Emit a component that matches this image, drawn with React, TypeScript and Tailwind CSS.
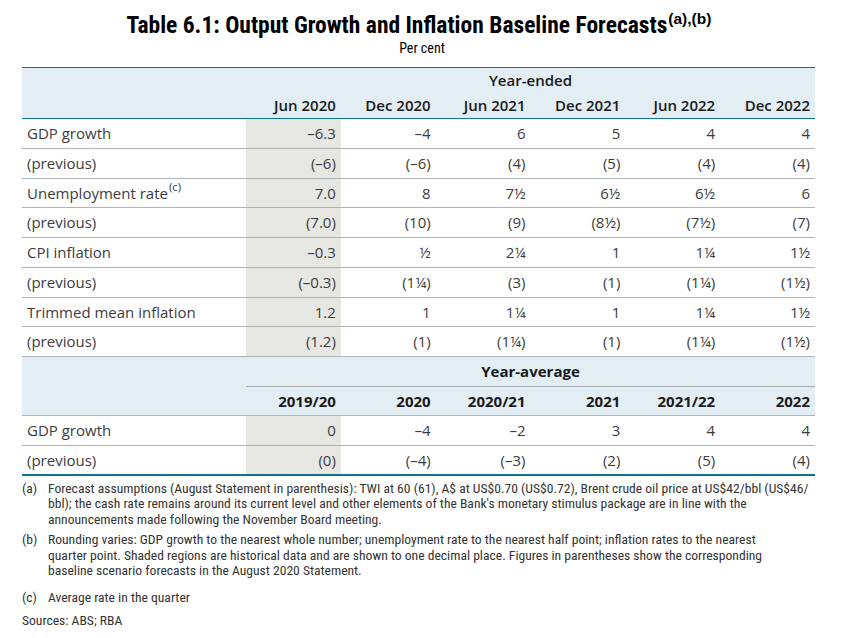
import React from "react";

const sec1 = [
  ["GDP growth", "–6.3", "–4", "6", "5", "4", "4"],
  ["(previous)", "(–6)", "(–6)", "(4)", "(5)", "(4)", "(4)"],
  ["Unemployment rate", "7.0", "8", "7½", "6½", "6½", "6"],
  ["(previous)", "(7.0)", "(10)", "(9)", "(8½)", "(7½)", "(7)"],
  ["CPI inflation", "–0.3", "½", "2¼", "1", "1¼", "1½"],
  ["(previous)", "(–0.3)", "(1¼)", "(3)", "(1)", "(1¼)", "(1½)"],
  ["Trimmed mean inflation", "1.2", "1", "1¼", "1", "1¼", "1½"],
  ["(previous)", "(1.2)", "(1)", "(1¼)", "(1)", "(1¼)", "(1½)"],
];

const sec2 = [
  ["GDP growth", "0", "–4", "–2", "3", "4", "4"],
  ["(previous)", "(0)", "(–4)", "(–3)", "(2)", "(5)", "(4)"],
];

function Row({ cells, last }: { cells: string[]; last?: boolean }) {
  return (
    <div
      className={
        "grid grid-cols-[224px_repeat(6,1fr)] " +
        (last
          ? "h-[30px] border-b-[2.5px] border-[#11718f]"
          : "h-[29.75px] border-b border-[#aeb3b6]")
      }
    >
      <div className="flex items-center pl-[5px]">
        {cells[0]}
        {cells[0] === "Unemployment rate" && (
          <sup className="text-[11.5px] top-[-0.55em] ml-[1px]">(c)</sup>
        )}
      </div>
      {cells.slice(1).map((c, i) => (
        <div
          key={i}
          className={
            "flex items-center justify-end pr-[5px] " +
            (i === 0 ? "bg-[#e6e6e2]" : "")
          }
        >
          {c}
        </div>
      ))}
    </div>
  );
}

export default function App() {
  return (
    <div className="w-[856px] h-[638px] bg-white text-[#3c3c3c] font-['Open_Sans',sans-serif] overflow-hidden">
      <div className="pt-[12px] pr-[18px] text-center font-['Roboto_Condensed','Roboto',sans-serif] font-bold text-[23.5px] leading-[27px] text-black">
        Table 6.1: Output Growth and Inflation Baseline Forecasts
        <sup className="font-['Liberation_Sans',sans-serif] text-[15.5px] top-[-0.55em] ml-[1px]">(a),(b)</sup>
      </div>
      <div className="mt-[1px] pr-[12px] text-center font-['Roboto_Condensed','Roboto',sans-serif] text-[14px] leading-[16px] text-black">
        Per cent
      </div>

      <div className="ml-[22px] mt-[11px] w-[793px] text-[15px]">
        {/* header 1 */}
        <div className="bg-[#e2edf4] border-t-[1.5px] border-b-[1.5px] border-[#11718f] h-[52px] font-semibold text-[#1a1a1a] text-[15px] [font-stretch:90%]">
          <div className="grid grid-cols-[224px_1fr] h-[25px]">
            <div />
            <div className="flex items-center justify-center">Year-ended</div>
          </div>
          <div className="grid grid-cols-[224px_repeat(6,1fr)] h-[24px]">
            <div />
            {["Jun 2020", "Dec 2020", "Jun 2021", "Dec 2021", "Jun 2022", "Dec 2022"].map((h) => (
              <div key={h} className="flex items-center justify-end pr-[5px]">
                {h}
              </div>
            ))}
          </div>
        </div>
        {sec1.map((r, i) => (
          <Row key={i} cells={r} />
        ))}
        {/* header 2 */}
        <div className="bg-[#e2edf4] border-b border-[#aeb3b6] h-[59px] font-bold text-[#1a1a1a] text-[15px] [font-stretch:90%]">
          <div className="grid grid-cols-[224px_1fr] h-[30px]">
            <div />
            <div className="flex items-center justify-center border-b-[1.5px] border-[#a9aeb1]">
              Year-average
            </div>
          </div>
          <div className="grid grid-cols-[224px_repeat(6,1fr)] h-[28px]">
            <div />
            {["2019/20", "2020", "2020/21", "2021", "2021/22", "2022"].map((h) => (
              <div key={h} className="flex items-center justify-end pr-[5px]">
                {h}
              </div>
            ))}
          </div>
        </div>
        <Row cells={sec2[0]} />
        <Row cells={sec2[1]} last />

        {/* footnotes */}
        <div className="mt-[5px] font-['Roboto_Condensed','Roboto',sans-serif] text-[13.6px] leading-[15.5px] text-[#333] whitespace-nowrap">
          <div className="flex">
            <div className="w-[26px] shrink-0">(a)</div>
            <div>
              <div>Forecast assumptions (August Statement in parenthesis): TWI at 60 (61), A$ at US$0.70 (US$0.72), Brent crude oil price at US$42/bbl (US$46/</div>
              <div>bbl); the cash rate remains around its current level and other elements of the Bank's monetary stimulus package are in line with the</div>
              <div>announcements made following the November Board meeting.</div>
            </div>
          </div>
          <div className="flex mt-[5px]">
            <div className="w-[26px] shrink-0">(b)</div>
            <div>
              <div>Rounding varies: GDP growth to the nearest whole number; unemployment rate to the nearest half point; inflation rates to the nearest</div>
              <div>quarter point. Shaded regions are historical data and are shown to one decimal place. Figures in parentheses show the corresponding</div>
              <div>baseline scenario forecasts in the August 2020 Statement.</div>
            </div>
          </div>
          <div className="flex mt-[11px]">
            <div className="w-[26px] shrink-0">(c)</div>
            <div>Average rate in the quarter</div>
          </div>
          <div className="mt-[8px]">Sources: ABS; RBA</div>
        </div>
      </div>
    </div>
  );
}
